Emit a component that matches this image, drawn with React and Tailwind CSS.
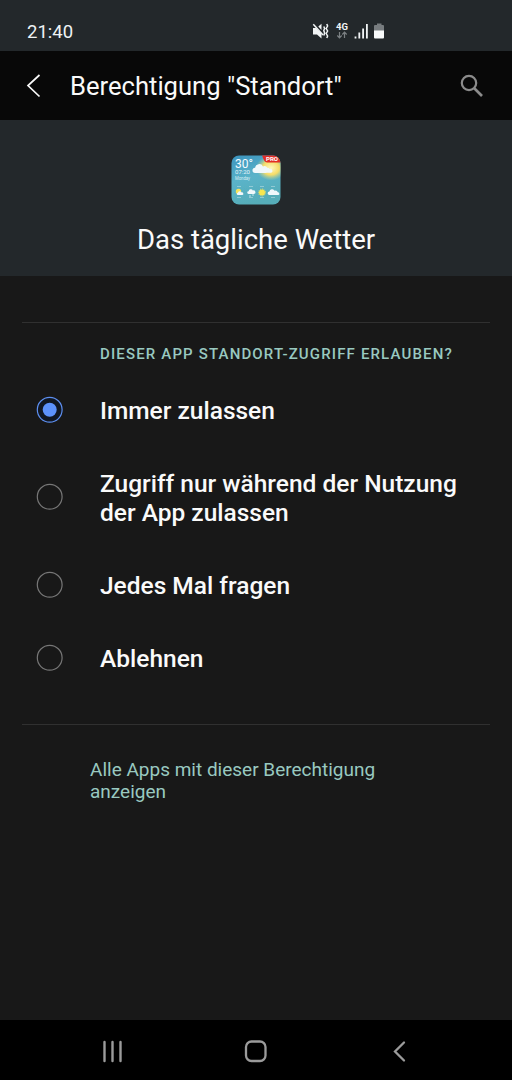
import React, { useState } from "react";

const options = [
  { id: "always", label: "Immer zulassen", size: "h-[73px]" },
  { id: "using", label: "Zugriff nur während der Nutzung der App zulassen", size: "h-[102px]" },
  { id: "ask", label: "Jedes Mal fragen", size: "h-[73px]" },
  { id: "deny", label: "Ablehnen", size: "h-[73px]" },
];

const StatusIcons = () => (
  <svg width="76" height="20" viewBox="312 22 76 20" className="ml-auto mr-[124px]">
    {/* vibrate / mute */}
    <path d="M313 28h3l5.500 5.500V38.500l-4.500-4H313zM318.300 26.600l3.200-2.800v6.300z" fill="#f1f4f5" />
    <path d="M313.300 24.300l9.700 10.700" stroke="#f1f4f5" strokeWidth="1.500" />
    <path d="M323.800 26.500l0.800 2-0.800 2 0.800 2.500-0.800 2.500M326.800 24l0.800 2-1.400 2.500 1.400 2.500-1.400 2.500 1.400 2.500-0.800 2" fill="none" stroke="#f1f4f5" strokeWidth="1.500" />
    {/* network */}
    <text x="336" y="30.300" textLength="12" fontSize="9.500" fontWeight="700" fill="#f1f4f5" fontFamily="Roboto, sans-serif">4G</text>
    <path d="M339.500 32v5.500M337.300 35.500l2.200 2.300 2.200-2.300M344.500 38v-5.500M342.300 34.500l2.200-2.300 2.200 2.300" fill="none" stroke="#7b8083" strokeWidth="1.200" />
    {/* signal */}
    <path d="M355.500 36.500v2M359.300 32.500v6M363.100 28.500v10M366.900 24v14.500" stroke="#f1f4f5" strokeWidth="1.800" />
    {/* battery */}
    <path d="M377 23.500h4.500V25H383q1 0 1 1v5h-10v-5q0-1 1-1h2z" fill="#777c7f" />
    <path d="M374 30.500h10v7q0 1-1 1h-8q-1 0-1-1z" fill="#f8fafa" />
  </svg>
);

const Cloud = ({ x, y, scale = 1 }) => (
  <path
    transform={`translate(${x} ${y}) scale(${scale})`}
    d="M2 8a2.500 2.500 0 0 1 0-5 4 4 0 0 1 7.500-1.200A3.200 3.200 0 0 1 12 8z"
    fill="#f0f8fb"
  />
);

const WeatherIcon = () => (
  <svg width="50" height="50" viewBox="0 0 50 50" fontFamily="Roboto, sans-serif">
    <defs>
      <linearGradient id="sky" x1="0" y1="0" x2="0.300" y2="1">
        <stop offset="0" stopColor="#3a92bd" />
        <stop offset="0.500" stopColor="#5ab3c9" />
        <stop offset="1" stopColor="#56adb9" />
      </linearGradient>
      <radialGradient id="glow">
        <stop offset="0" stopColor="#fff8bd" />
        <stop offset="0.550" stopColor="#f5dc68" />
        <stop offset="1" stopColor="#b9d79a" stopOpacity="0" />
      </radialGradient>
      <clipPath id="tile">
        <rect x="0.500" y="0.500" width="49" height="49" rx="7.500" />
      </clipPath>
    </defs>
    <g clipPath="url(#tile)">
      <rect width="50" height="50" fill="url(#sky)" />
      <ellipse cx="40" cy="13" rx="15" ry="12.500" fill="url(#glow)" />
      <Cloud x="22" y="9.500" scale="1.050" />
      <Cloud x="33" y="13" scale="0.600" />
      <path d="M31 0h19v7.500H36q-3 0-5-7.500z" fill="#e22d27" />
      <text x="35" y="6" textLength="12" lengthAdjust="spacingAndGlyphs" fontSize="5" fontWeight="700" fill="#fff">PRO</text>
      <text x="4" y="12.500" textLength="18" lengthAdjust="spacingAndGlyphs" fontSize="12" fill="#f4fbff">30°</text>
      <text x="4" y="19.300" textLength="15" lengthAdjust="spacingAndGlyphs" fontSize="6" fill="#e6f5fa">07:20</text>
      <text x="4" y="24.700" textLength="15" lengthAdjust="spacingAndGlyphs" fontSize="4.500" fill="#d9edf4">Monday</text>
      <g fill="#d6ecef" opacity="0.450">
        <rect x="6" y="31" width="4" height="1" />
        <rect x="18" y="31" width="4" height="1" />
        <rect x="29" y="31" width="4" height="1" />
        <rect x="40" y="31" width="4" height="1" />
        <rect x="6" y="42" width="4" height="1" />
        <rect x="18" y="42" width="4" height="1" />
        <rect x="29" y="42" width="4" height="1" />
        <rect x="40" y="42" width="4" height="1" />
      </g>
      <circle cx="7.500" cy="36.500" r="2.700" fill="#f4e35b" />
      <Cloud x="6" y="36.500" scale="0.450" />
      <Cloud x="16.500" y="34.500" scale="0.560" />
      <path d="M19 40v2M22 39v2" stroke="#d8eff4" strokeWidth="0.800" />
      <circle cx="31" cy="37.500" r="3" fill="#f7e64f" />
      <circle cx="31" cy="37.500" r="3.500" fill="none" stroke="#f1df61" strokeDasharray="1 1" />
      <Cloud x="37" y="34.500" scale="0.700" />
      <Cloud x="42" y="36.500" scale="0.450" />
    </g>
  </svg>
);

const Radio = ({ checked }) => (
  <svg width="28" height="28" viewBox="0 0 28 28" className="shrink-0">
    <circle cx="13.700" cy="13.800" r="12.400" fill={checked ? "#111722" : "none"} stroke={checked ? "#5d8ff0" : "#777"} strokeWidth="1.200" />
    {checked && <circle cx="13.700" cy="13.800" r="7" fill="#5d92fb" />}
  </svg>
);

const App = () => {
  const [selected, setSelected] = useState("always");

  return (
    <div className="flex h-[1080px] w-[512px] flex-col overflow-hidden bg-[#181818] font-['Roboto',sans-serif] text-[#fafafa]">
      <div className="flex h-[51px] items-center bg-[#23282b] pt-[13px] pl-[27px]">
        <span className="text-[18.500px] leading-6 text-[#eef3f5]">21:40</span>
        <StatusIcons />
      </div>

      <header className="flex h-[69px] items-center bg-[#080808] pt-px pl-[26px]">
        <button className="w-11">
          <svg width="16" height="26" viewBox="0 0 16 26" fill="none" stroke="#fafafa" strokeWidth="1.700">
            <path d="M13.500 2L2 12.500 13.500 23.500" />
          </svg>
        </button>
        <h1 className="whitespace-nowrap text-[25.600px] leading-8">Berechtigung "Standort"</h1>
        <button className="ml-auto mr-7">
          <svg width="24" height="24" viewBox="0 0 24 24" fill="none" stroke="#8b8b8b">
            <circle cx="9" cy="9" r="7.200" strokeWidth="2.200" />
            <path d="M14 14l8 8" strokeWidth="2.600" />
          </svg>
        </button>
      </header>

      <section className="flex h-[156px] flex-col items-center bg-[#23282b] pt-[35px]">
        <WeatherIcon />
        <h2 className="mt-[19px] whitespace-nowrap text-[27.500px] leading-8">Das tägliche Wetter</h2>
      </section>

      <main className="flex-1 px-[22px] pt-[46px]">
        <div className="h-[403px] border-y border-[#303030]">
          <h3 className="pt-[21px] pl-[78px] text-[15px] leading-5 font-medium tracking-[1.150px] whitespace-nowrap text-[#99c9c0]">
            DIESER APP STANDORT-ZUGRIFF ERLAUBEN?
          </h3>
          <div className="mt-[9px]">
            {options.map((o) => (
              <button
                key={o.id}
                onClick={() => setSelected(o.id)}
                className={`flex w-full items-center pl-[14px] text-left ${o.size}`}
              >
                <Radio checked={selected === o.id} />
                <span className="ml-9 w-[370px] pt-0.5 text-[24.500px] leading-[29px] font-medium">{o.label}</span>
              </button>
            ))}
          </div>
        </div>
        <a className="mt-[34px] ml-[68px] block w-[310px] text-[19px] leading-[22px] text-[#99c9c0]">
          Alle Apps mit dieser Berechtigung anzeigen
        </a>
      </main>

      <nav className="flex h-[60px] items-center bg-black">
        <svg width="512" height="60" viewBox="0 0 512 60" fill="none" stroke="#9b9b9b">
          <path d="M104.500 22v19M112.500 22v19M120.500 22v19" strokeWidth="2.400" strokeLinecap="round" />
          <rect x="246" y="21.500" width="19.500" height="19.500" rx="5.500" strokeWidth="2.300" />
          <path d="M404 22.500l-9 9 9 9" strokeWidth="2.300" strokeLinecap="round" />
        </svg>
      </nav>
    </div>
  );
};

export default App;
